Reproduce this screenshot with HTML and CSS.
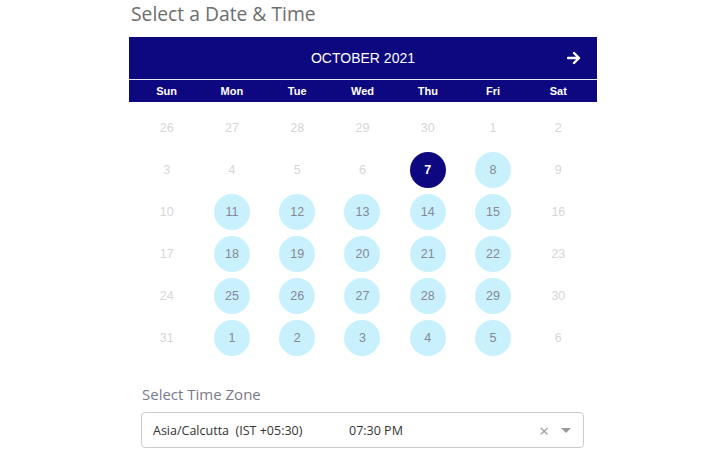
FILE: index.html
```html
<!DOCTYPE html>
<html>
<head>
<meta charset="utf-8">
<link rel="stylesheet" href="styles.css">
</head>
<body>
<div class="page">
  <h2 class="title">Select a Date &amp; Time</h2>
  <div class="calendar">
    <div class="cal-head">
      <span class="month">OCTOBER 2021</span>
      <svg class="next" width="14" height="14" viewBox="0 0 14 14"><path d="M1 7h11M7 2l5 5-5 5" fill="none" stroke="#fff" stroke-width="2.4" stroke-linecap="round" stroke-linejoin="round"/></svg>
    </div>
    <div class="weekdays">
      <span>Sun</span><span>Mon</span><span>Tue</span><span>Wed</span><span>Thu</span><span>Fri</span><span>Sat</span>
    </div>
  </div>
  <div class="days">
    <span class="d off">26</span><span class="d off">27</span><span class="d off">28</span><span class="d off">29</span><span class="d off">30</span><span class="d off">1</span><span class="d off">2</span>
    <span class="d off">3</span><span class="d off">4</span><span class="d off">5</span><span class="d off">6</span><span class="d sel">7</span><span class="d av">8</span><span class="d off">9</span>
    <span class="d off">10</span><span class="d av">11</span><span class="d av">12</span><span class="d av">13</span><span class="d av">14</span><span class="d av">15</span><span class="d off">16</span>
    <span class="d off">17</span><span class="d av">18</span><span class="d av">19</span><span class="d av">20</span><span class="d av">21</span><span class="d av">22</span><span class="d off">23</span>
    <span class="d off">24</span><span class="d av">25</span><span class="d av">26</span><span class="d av">27</span><span class="d av">28</span><span class="d av">29</span><span class="d off">30</span>
    <span class="d off">31</span><span class="d av">1</span><span class="d av">2</span><span class="d av">3</span><span class="d av">4</span><span class="d av">5</span><span class="d off">6</span>
  </div>
  <div class="tz">
    <div class="tz-label">Select Time Zone</div>
    <div class="select">
      <span class="zone">Asia/Calcutta&nbsp;&nbsp;(IST +05:30)</span>
      <span class="time">07:30 PM</span>
      <span class="clear">&times;</span>
      <span class="caret"></span>
    </div>
  </div>
</div>
</body>
</html>
```

FILE: styles.css
```css
html, body {
  margin: 0;
  padding: 0;
  background: #fff;
}
.page {
  width: 468px;
  margin-left: 129px;
  font-family: Arial, "Liberation Sans", sans-serif;
}
.title {
  margin: -3px 0 0 2px;
  height: 40px;
  font-family: "Open Sans", sans-serif;
  font-weight: 400;
  font-size: 19.3px;
  line-height: 34px;
  color: #6e6e6e;
}
.calendar {
  background: #0d0780;
}
.cal-head {
  position: relative;
  height: 42px;
  display: flex;
  align-items: center;
  justify-content: center;
  border-bottom: 1px solid #e6e6f0;
}
.month {
  color: #fff;
  font-size: 14px;
}
.next {
  position: absolute;
  right: 16px;
  top: 14px;
}
.weekdays {
  display: grid;
  grid-template-columns: repeat(7, 1fr);
  padding: 0 6px 0 5px;
  height: 22px;
  align-items: center;
}
.weekdays span {
  text-align: center;
  color: #fff;
  font-weight: bold;
  font-size: 11px;
}
.days {
  display: grid;
  grid-template-columns: repeat(7, 1fr);
  grid-auto-rows: 42px;
  padding: 5px 6px 0 5px;
  align-items: center;
  justify-items: center;
}
.d {
  width: 36px;
  height: 36px;
  border-radius: 50%;
  display: flex;
  align-items: center;
  justify-content: center;
  font-size: 12.5px;
}
.off { color: #d6d6d6; }
.av { background: #c9f1fd; color: #878797; }
.sel { background: #0d0780; color: #fff; font-weight: bold; }
.tz {
  padding: 24px 13px 0 12px;
}
.tz-label {
  font-family: "Open Sans", sans-serif;
  font-size: 15px;
  line-height: 22px;
  color: #7a7a88;
  margin: 0 0 7px 1px;
}
.select {
  display: flex;
  align-items: center;
  height: 34px;
  border: 1px solid #cccccc;
  border-radius: 4px;
  padding: 0 12px 0 11px;
  font-family: "Open Sans", sans-serif;
  font-size: 12.5px;
  color: #333;
}
.zone { width: 196px; }
.time { flex: 1; }
.clear {
  color: #999;
  font-size: 17px;
  margin-right: 12px;
}
.caret {
  width: 0;
  height: 0;
  border-left: 5px solid transparent;
  border-right: 5px solid transparent;
  border-top: 5px solid #999;
}
```
